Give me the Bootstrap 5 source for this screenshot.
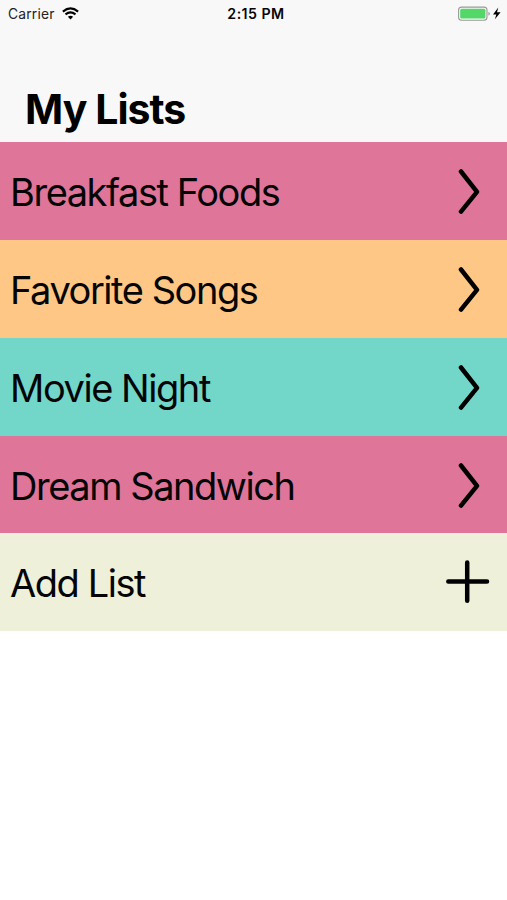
<!DOCTYPE html>
<html lang="en">
<head>
<meta charset="utf-8">
<meta name="viewport" content="width=device-width, initial-scale=1">
<title>My Lists</title>
<link href="https://cdn.jsdelivr.net/npm/bootstrap@5.3.0/dist/css/bootstrap.min.css" rel="stylesheet">
<style>
body{font-family:Inter,"Liberation Sans",sans-serif;color:#050505;background:#fff;height:900px;overflow:hidden}
.app-head{height:142.4px;background:#f8f8f8}
.status{height:28px;font-size:13.8px;line-height:28px;padding:0 6px 0 8px}
.status>div{flex:1 1 0}
.carrier{letter-spacing:.2px;color:#222;padding-top:1px}
.clock{font-weight:600;font-size:14.2px;letter-spacing:.45px;padding-left:3px}
.page-title{font-size:41px;font-weight:700;line-height:50px;letter-spacing:-.95px;padding-left:25px;margin:0 0 8px;color:#000}
.list-row{height:97.75px;padding:0 17px 0 10px;font-size:38px;letter-spacing:-1.45px}
.list-row svg{display:block;flex:none;fill:none;stroke:#000;stroke-width:4.5;stroke-linecap:round;stroke-linejoin:round}
.list-label{white-space:nowrap;line-height:1;padding-top:2px}
.pink{background:#df7599}.peach{background:#ffc785}.teal{background:#72d6c9}.cream{background:#eef0d9}
</style>
</head>
<body>
<header class="app-head d-flex flex-column justify-content-between">
<div class="status d-flex align-items-center">
<div class="d-flex align-items-center"><span class="carrier lh-1">Carrier</span>
<svg style="margin-left:7px" width="17" height="13" viewBox="0 0 17 13" fill="none" stroke="#000" stroke-width="2.1"><path d="M.9 4.6Q8.5-1.8 16.1 4.6M3.5 7.4Q8.5 3.4 13.5 7.4"/><path d="M8.5 12.5L5.9 9.8Q8.5 7.8 11.1 9.8Z" fill="#000" stroke="none"/></svg></div>
<div class="clock text-center">2:15 PM</div>
<div class="d-flex justify-content-end align-items-center">
<svg width="44" height="16" viewBox="0 0 44 16"><rect x="1.6" y="1.1" width="28.4" height="13.2" rx="3" fill="none" stroke="#999" stroke-width="1.1"/><rect x="3.2" y="2.8" width="25.2" height="9.8" rx="1.5" fill="#53d769"/><path d="M31.5 5.7q2.6 2 0 4z" fill="#888"/><path d="M41.3 1.6L36 8.5h3.3L37.9 13.2 43.6 6.3h-3.6z"/></svg></div>
</div>
<h1 class="page-title">My Lists</h1>
</header>
<main>
<div class="list-row pink d-flex align-items-center justify-content-between"><span class="list-label">Breakfast Foods</span><svg width="44" height="46" viewBox="0 0 44 46"><path d="M15 3.5L31 23.8 15 43.6"/></svg></div>
<div class="list-row peach d-flex align-items-center justify-content-between"><span class="list-label">Favorite Songs</span><svg width="44" height="46" viewBox="0 0 44 46"><path d="M15 3.5L31 23.8 15 43.6"/></svg></div>
<div class="list-row teal d-flex align-items-center justify-content-between"><span class="list-label">Movie Night</span><svg width="44" height="46" viewBox="0 0 44 46"><path d="M15 3.5L31 23.8 15 43.6"/></svg></div>
<div class="list-row pink d-flex align-items-center justify-content-between"><span class="list-label">Dream Sandwich</span><svg width="44" height="46" viewBox="0 0 44 46"><path d="M15 3.5L31 23.8 15 43.6"/></svg></div>
<div class="list-row cream d-flex align-items-center justify-content-between"><span class="list-label">Add List</span><svg width="44" height="46" viewBox="0 0 44 46"><path d="M2.3 22.6H41M21.2 3.4V41.8"/></svg></div>
</main>
<script src="https://cdn.jsdelivr.net/npm/bootstrap@5.3.0/dist/js/bootstrap.bundle.min.js"></script>
</body>
</html>
